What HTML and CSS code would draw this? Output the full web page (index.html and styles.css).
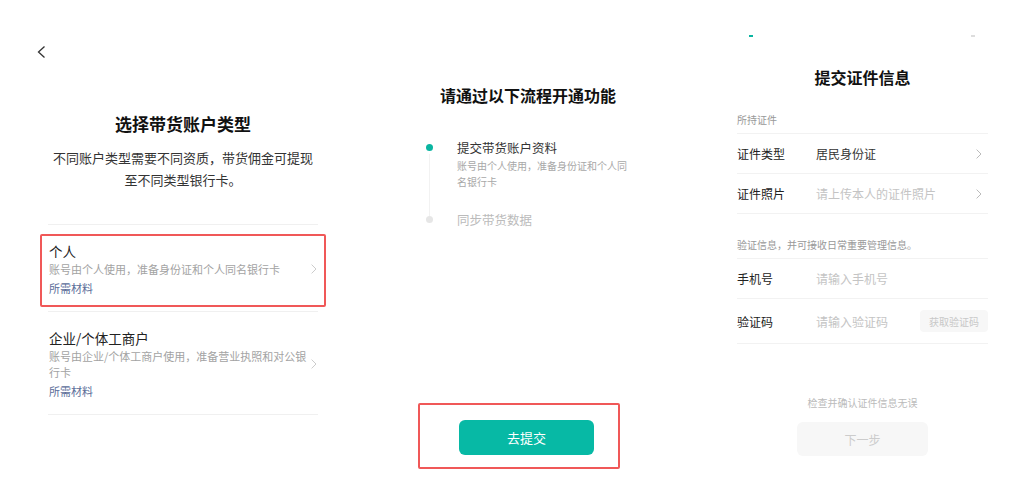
FILE: index.html
```html
<!DOCTYPE html>
<html lang="zh-CN">
<head>
  <meta charset="UTF-8" />
  <meta name="viewport" content="width=device-width, initial-scale=1.0"/>
  <title>开通带货功能</title>
  <link rel="stylesheet" href="styles.css">
</head>
<body>

  <div class="screens">

    <!-- 选择账户类型 -->
    <section class="screen screen--type">
      <a class="back" href="#">
        <svg width="9" height="12" viewBox="0 0 9 12"><polyline points="7.5,0.5 1.5,6 7.5,11.5" fill="none" stroke="#333" stroke-width="1.3"/></svg>
      </a>
      <h1 class="title">选择带货账户类型</h1>
      <p class="intro">不同账户类型需要不同资质，带货佣金可提现<br>至不同类型银行卡。</p>

      <ul class="types">
        <li class="type">
          <div class="type-card highlight">
            <div class="type-body">
              <div class="type-name">个人</div>
              <div class="type-desc">账号由个人使用，准备身份证和个人同名银行卡</div>
              <div class="type-link">所需材料</div>
            </div>
            <svg class="arrow" width="6" height="10" viewBox="0 0 6 10"><polyline points="0.6,0.6 5,5 0.6,9.4" fill="none" stroke="#ccc" stroke-width="1"/></svg>
          </div>
        </li>
        <li class="type">
          <div class="type-card">
            <div class="type-body">
              <div class="type-name">企业/个体工商户</div>
              <div class="type-desc">账号由企业/个体工商户使用，准备营业执照和对公银行卡</div>
              <div class="type-link">所需材料</div>
            </div>
            <svg class="arrow" width="6" height="10" viewBox="0 0 6 10"><polyline points="0.6,0.6 5,5 0.6,9.4" fill="none" stroke="#ccc" stroke-width="1"/></svg>
          </div>
        </li>
      </ul>
    </section>

    <!-- 开通流程 -->
    <section class="screen screen--flow">
      <h2 class="title title--sm">请通过以下流程开通功能</h2>
      <ol class="steps">
        <li class="step step--active">
          <span class="step-rail"><i class="step-dot"></i><i class="step-line"></i></span>
          <div class="step-body">
            <div class="step-name">提交带货账户资料</div>
            <div class="step-desc">账号由个人使用，准备身份证和个人同名银行卡</div>
          </div>
        </li>
        <li class="step">
          <span class="step-rail"><i class="step-dot"></i></span>
          <div class="step-body">
            <div class="step-name">同步带货数据</div>
          </div>
        </li>
      </ol>
      <div class="submit highlight">
        <button class="btn-primary">去提交</button>
      </div>
    </section>

    <!-- 提交证件信息 -->
    <section class="screen screen--cert">
      <div class="progress"><i class="progress-on"></i><i class="progress-off"></i></div>
      <h2 class="title title--sm">提交证件信息</h2>

      <div class="group">
        <div class="group-label">所持证件</div>
        <div class="field">
          <span class="field-label">证件类型</span>
          <span class="field-value">居民身份证</span>
          <svg class="arrow" width="6" height="10" viewBox="0 0 6 10"><polyline points="0.6,0.6 5,5 0.6,9.4" fill="none" stroke="#bbb" stroke-width="1"/></svg>
        </div>
        <div class="field">
          <span class="field-label">证件照片</span>
          <span class="field-value placeholder">请上传本人的证件照片</span>
          <svg class="arrow" width="6" height="10" viewBox="0 0 6 10"><polyline points="0.6,0.6 5,5 0.6,9.4" fill="none" stroke="#bbb" stroke-width="1"/></svg>
        </div>
      </div>

      <div class="group">
        <div class="group-label group-label--gap">验证信息，并可接收日常重要管理信息。</div>
        <div class="field">
          <span class="field-label">手机号</span>
          <span class="field-value placeholder">请输入手机号</span>
        </div>
        <div class="field field--tall">
          <span class="field-label">验证码</span>
          <span class="field-value placeholder">请输入验证码</span>
          <button class="btn-code">获取验证码</button>
        </div>
      </div>

      <div class="form-foot">
        <p class="hint">检查并确认证件信息无误</p>
        <button class="btn-next">下一步</button>
      </div>
    </section>

  </div>

</body>
</html>
```

FILE: styles.css
```css
body {
  margin: 0;
  background: #fff;
  font-family: "Noto Sans CJK SC", "Noto Sans", sans-serif;
  color: #222;
}
ul, ol {
  list-style: none;
  margin: 0;
  padding: 0;
}
p {
  margin: 0;
}
button {
  font-family: inherit;
  border: none;
  cursor: pointer;
}
.screens {
  display: flex;
  width: 1017px;
  height: 492px;
}
.screen {
  display: flex;
  flex-direction: column;
  box-sizing: border-box;
  height: 492px;
}
.highlight {
  border: 2px solid #f05858 !important;
  border-radius: 2px;
}

/* left */
.screen--type {
  width: 370px;
  padding: 46px 52px 0 48px;
}
.back {
  display: block;
  width: 9px;
  height: 12px;
  margin-left: -11px;
}
.back svg {
  display: block;
}
.title {
  margin: 54px 0 0;
  font-size: 17px;
  line-height: 24px;
  font-weight: 600;
  text-align: center;
  color: #111;
}
.intro {
  margin-top: 11px;
  font-size: 13px;
  line-height: 22px;
  text-align: center;
  color: #333;
}
.types {
  margin-top: 33px;
  border-top: 1px solid #f0f0f0;
}
.type {
  padding: 9px 0 4px;
  border-bottom: 1px solid #f0f0f0;
}
.type-card {
  display: flex;
  align-items: center;
  margin: 0 -8px;
  padding: 5px 7px 8px;
  border: 2px solid transparent;
}
.type-body {
  flex: 1;
}
.type-name {
  font-size: 13.5px;
  line-height: 20px;
  color: #222;
}
.type-desc {
  max-width: 262px;
  font-size: 11px;
  line-height: 16px;
  color: #a3a3a3;
}
.type-link {
  margin-top: 2px;
  font-size: 11px;
  line-height: 18px;
  color: #5b6d99;
}
.arrow {
  flex: none;
  display: block;
}

/* middle */
.screen--flow {
  width: 316px;
  padding: 84px 0 23px;
}
.title--sm {
  margin: 0;
  font-size: 16px;
  line-height: 22px;
}
.steps {
  margin: 33px 0 0 56px;
}
.step {
  display: flex;
  gap: 24px;
}
.step--active {
  padding-bottom: 21px;
}
.step-rail {
  display: flex;
  flex-direction: column;
  align-items: center;
  width: 7px;
}
.step-dot {
  width: 7px;
  height: 7px;
  margin-top: 5px;
  border-radius: 50%;
  background: #e6e6e6;
}
.step--active .step-dot {
  background: #0ab5a1;
}
.step-line {
  flex: 1;
  width: 1px;
  margin-top: 3px;
  margin-bottom: -26px;
  background: #f2f2f2;
}
.step-name {
  font-size: 12.5px;
  line-height: 18px;
  color: #bbb;
}
.step--active .step-name {
  color: #333;
}
.step-desc {
  max-width: 175px;
  margin-top: 1px;
  font-size: 10px;
  line-height: 16px;
  color: #a8a8a8;
}
.submit {
  align-self: flex-start;
  margin: auto 0 0 48px;
  padding: 15px 24px 12px 39px;
}
.btn-primary {
  display: block;
  width: 135px;
  height: 35px;
  border-radius: 6px;
  background: #07b9a5;
  color: #fff;
  font-size: 13px;
}

/* right */
.screen--cert {
  width: 331px;
  padding: 35px 29px 36px 51px;
}
.progress {
  display: flex;
  justify-content: space-between;
  padding: 0 13px 0 12px;
  margin-bottom: 29px;
}
.progress i {
  width: 4px;
  height: 2px;
}
.progress-on {
  background: #0ab5a1;
}
.progress-off {
  background: #ddd;
}
.group-label {
  margin-top: 25px;
  padding-bottom: 6px;
  font-size: 10px;
  line-height: 14px;
  color: #999;
}
.group-label--gap {
  margin-top: 24px;
}
.field {
  display: flex;
  align-items: center;
  height: 39px;
  border-top: 1px solid #f2f2f2;
  font-size: 12px;
}
.group .field:last-child {
  border-bottom: 1px solid #f2f2f2;
}
.field--tall {
  height: 44px;
}
.field-label {
  width: 79px;
  flex: none;
  color: #222;
}
.field-value {
  flex: 1;
  color: #333;
}
.placeholder {
  color: #c4c4c4;
}
.screen--cert .arrow {
  margin-right: 6px;
}
.btn-code {
  width: 68px;
  height: 22px;
  border-radius: 4px;
  background: #f7f7f7;
  color: #c8c8c8;
  font-size: 10px;
  padding: 0;
}
.form-foot {
  margin-top: auto;
  display: flex;
  flex-direction: column;
  align-items: center;
}
.hint {
  margin-bottom: 12px;
  font-size: 10px;
  line-height: 14px;
  color: #bbb;
}
.btn-next {
  width: 131px;
  height: 34px;
  border-radius: 6px;
  background: #f7f7f7;
  color: #ccc;
  font-size: 12px;
}
```
